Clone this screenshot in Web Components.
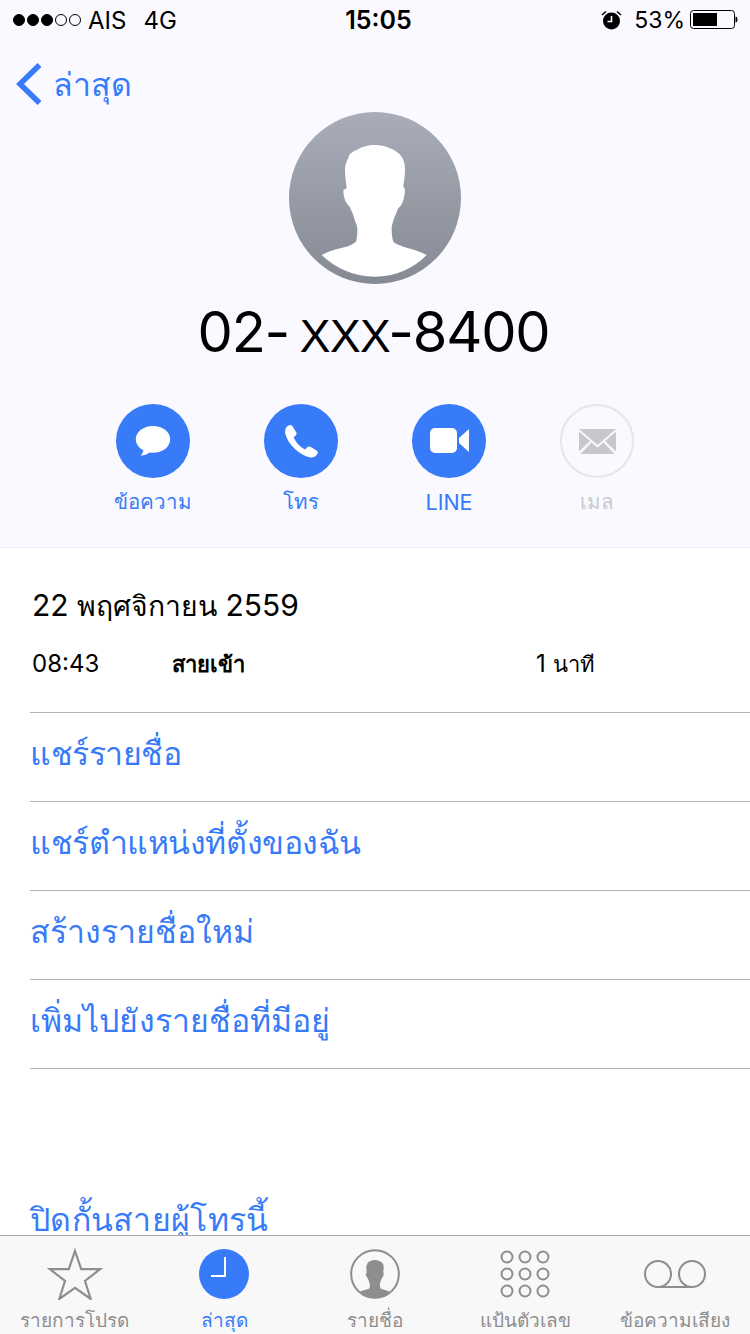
<!DOCTYPE html>
<html lang="th">
<head>
<meta charset="utf-8">
<title>ล่าสุด</title>
<style>
  html, body { margin: 0; padding: 0; background: #fff; }
  body { width: 750px; height: 1334px; overflow: hidden; font-family: Inter, "Noto Sans", "Liberation Sans", sans-serif; }
</style>
</head>
<body>
<call-app></call-app>
<script>
const FONT = 'Inter, "Noto Sans", "Liberation Sans", sans-serif'
const BLUE = '#377bf8'
const PERSON = 'M86 33C79 33 72 35 67.700 38C62 40 59.500 43 59.300 46.300C57 50 56 54 56 58C56 64 57 70 57.700 76.300L54.300 78C54.300 82 55 85 56 88C57 91 59 93 61 95.300C62 98 63 100 64.300 103C65 108 68 112 68.300 116.300C68.500 121 68 126 67 129.700C64 132 61 133.500 57.700 134.700C48 137 39 139 32.700 143C47 157 66 164.700 86 164.700C106 164.700 124 157 137.700 143C131 139 122 137 114.300 134.700C110 133 107 132 104.300 129.700C103 125 102.500 120 102.700 114.700C104 108 107 102 109.300 96.300C112 94 113.500 91 114.300 88C115.500 84 116 81 116 77.300L114.300 74.700C115 69 116 64 116 58C116 53 115 48 112.700 44.700C110 41 106 38 101 36.300C96 34 91 33 86 33z'

// Status bar at the top.
customElements.define('status-bar', class extends HTMLElement {
  constructor () {
    super()
    this.attachShadow({ mode: 'open' }).innerHTML = `
      <style>
        :host { display: grid; grid-template-columns: 1fr auto 1fr; align-items: center; height: 40px; padding: 0 12px 0 13px; font: 24px ${FONT}; color: #000; }
        .left, .right { display: flex; align-items: center; }
        .right { justify-content: flex-end; }
        .dots { display: flex; gap: 2px; margin-right: 7px; }
        .dots i { width: 12px; height: 12px; border-radius: 50%; border: 1px solid #000; box-sizing: border-box; }
        .dots i.on { background: #000; }
        .net { margin-left: 17px; }
        .time { font-weight: 600; font-size: 25px; margin-left: 6px; }
        .alarm { margin-right: 12px; }
        .pct { margin-right: 5px; font-size: 23px; }
        svg { display: block; }
      </style>
      <div class="left">
        <div class="dots"><i class="on"></i><i class="on"></i><i class="on"></i><i></i><i></i></div>
        <span>AIS</span><span class="net">4G</span>
      </div>
      <div class="time">15:05</div>
      <div class="right">
        <svg class="alarm" width="21" height="20" viewBox="0 0 21 20">
          <circle cx="10.500" cy="11" r="8.500" fill="#000"/>
          <path d="M10.500 6v5.500H6.500" fill="none" stroke="#fff" stroke-width="1.600"/>
          <path d="M1 5 5 1.500M20 5 16 1.500" stroke="#000" stroke-width="1.600"/>
        </svg>
        <span class="pct">53%</span>
        <svg width="48" height="20" viewBox="0 0 48 20">
          <rect x=".5" y=".5" width="44" height="18" rx="3" fill="none" stroke="#000"/>
          <rect x="3" y="3" width="24" height="13" fill="#000"/>
          <path d="M45.500 6.500c1.500 0 2 1.500 2 3s-.5 3-2 3z" fill="#000"/>
        </svg>
      </div>`
  }
})

// Circle button with an icon and a caption under it.
customElements.define('action-button', class extends HTMLElement {
  constructor () {
    super()
    this.attachShadow({ mode: 'open' }).innerHTML = `
      <style>
        :host { display: flex; flex-direction: column; align-items: center; width: 148px; color: ${BLUE}; font: 20.500px/30px ${FONT}; }
        .circle { width: 74px; height: 74px; border-radius: 50%; background: ${BLUE}; display: flex; align-items: center; justify-content: center; margin-bottom: 9px; box-sizing: border-box; }
        :host([off]) { color: #c9c9ce; }
        :host([off]) .circle { background: none; border: 2px solid #e6e6ea; }
      </style>
      <div class="circle"><slot name="icon"></slot></div>
      <slot></slot>`
  }
})

// One blue row of the list with a rule under it.
customElements.define('list-row', class extends HTMLElement {
  constructor () {
    super()
    this.attachShadow({ mode: 'open' }).innerHTML = `
      <style>
        :host { display: flex; align-items: center; box-sizing: border-box; height: 89px; padding-bottom: 7px; border-bottom: 1px solid #b2b2b2; color: ${BLUE}; font: 32px/44px ${FONT}; }
      </style>
      <slot></slot>`
  }
})

// Item of the tab bar.
customElements.define('tab-item', class extends HTMLElement {
  constructor () {
    super()
    this.attachShadow({ mode: 'open' }).innerHTML = `
      <style>
        :host { display: flex; flex-direction: column; align-items: center; color: #8e8e8e; font: 19px/26px ${FONT}; white-space: nowrap; }
        :host([active]) { color: ${BLUE}; }
        .icon { height: 58px; display: flex; align-items: center; justify-content: center; margin-top: 9px; margin-bottom: 5px; }
      </style>
      <div class="icon"><slot name="icon"></slot></div>
      <slot></slot>`
  }
})

customElements.define('tab-bar', class extends HTMLElement {
  constructor () {
    super()
    this.attachShadow({ mode: 'open' }).innerHTML = `
      <style>
        :host { display: grid; grid-template-columns: 149px 150px 151px 150px 150px; height: 99px; box-sizing: border-box; border-top: 1px solid #a9a9a9; background: #f8f8f8; flex: none; }
      </style>
      <slot></slot>`
  }
})

// The whole screen.
customElements.define('call-app', class extends HTMLElement {
  constructor () {
    super()
    this.attachShadow({ mode: 'open' }).innerHTML = `
      <style>
        :host { display: flex; flex-direction: column; width: 750px; height: 1334px; font-family: ${FONT}; }
        .main { flex: 1; overflow: hidden; min-height: 0; }
        .head { background: #f9f9ff; height: 547px; border-bottom: 1px solid #f0f0f3; }
        .nav { display: flex; align-items: center; gap: 10px; height: 88px; padding-left: 15px; color: ${BLUE}; font-size: 32px; }
        .avatar { display: block; margin: -16px auto 0; }
        .number { text-align: center; font-size: 56px; letter-spacing: -1.200px; word-spacing: -4px; line-height: 68px; margin-top: 14px; padding-right: 3px; color: #000; }
        .number span { font: 46px "Liberation Sans", sans-serif; letter-spacing: -.5px; margin-right: -2px; }
        .actions { display: flex; justify-content: center; margin-top: 38px; }
        .actions .latin { font-size: 21.500px; }
        .detail { padding: 37px 0 0 32px; color: #000; }
        .date { font-size: 30px; line-height: 40px; }
        .date span { font-size: 28.300px; }
        .call { display: grid; grid-template-columns: 140px 364px auto; font-size: 24px; line-height: 34px; margin-top: 21px; margin-bottom: 31px; }
        .call b { font-weight: 700; font-size: 22px; }
        .call span span { font-size: 22px; }
        .list { margin-left: 30px; border-top: 1px solid #b2b2b2; }
        .gap { height: 89px; }
        .block { color: ${BLUE}; font-size: 32px; letter-spacing: .3px; line-height: 44px; margin-left: 30px; margin-top: 40px; }
      </style>
      <div class="main">
        <div class="head">
          <status-bar></status-bar>
          <div class="nav">
            <svg width="28" height="44" viewBox="0 0 28 44"><path d="M24.500 3 5 22l19.500 19" fill="none" stroke="${BLUE}" stroke-width="5.500"/></svg>
            <span>ล่าสุด</span>
          </div>
          <svg class="avatar" width="172" height="172" viewBox="0 0 172 172">
            <defs>
              <linearGradient id="g" x1="0" y1="0" x2="0" y2="1"><stop offset="0" stop-color="#a9adb9"/><stop offset="1" stop-color="#868a94"/></linearGradient>
            </defs>
            <circle cx="86" cy="86" r="86" fill="url(#g)"/>
            <path fill="#fff" d="${PERSON}"/>
          </svg>
          <div class="number">02- <span>XXX</span>-8400</div>
          <div class="actions">
            <action-button>
              <svg slot="icon" width="36" height="32" viewBox="0 0 36 32"><path fill="#fff" d="M18 1C8.500 1 .8 6.900.8 14.200c0 4.600 3 8.600 7.600 11-.3 1.700-1.300 3.600-2.800 5.300 3 .2 6.500-1 8.700-3 1.200.2 2.400.3 3.700.3 9.500 0 17.200-6 17.200-13.600C35.200 6.900 27.500 1 18 1z"/></svg>
              ข้อความ
            </action-button>
            <action-button>
              <svg slot="icon" width="34" height="34" viewBox="0 0 34 34"><path fill="#fff" d="M3 2.500C4.500 1 6.800.300 8 1.600l4.200 6.600c.7 1.200.5 2.400-.5 3.300l-2 1.700c1.700 4.800 6.600 10 11.500 12.200l2-2.200c1-1 2.200-1 3.200-.4l6.500 4c1.400 1 .8 3.200-.5 4.500-1.600 1.800-4 2.500-7 1.900C15 30.800 4 20 1.500 10.500.700 7 1.300 4.400 3 2.500z"/></svg>
              โทร
            </action-button>
            <action-button>
              <svg slot="icon" width="39" height="26" viewBox="0 0 39 26"><rect x="0" y="0" width="27" height="25" rx="5" fill="#fff"/><path fill="#fff" d="M29 10 39 1v23L29 15z"/></svg>
              <span class="latin">LINE</span>
            </action-button>
            <action-button off>
              <svg slot="icon" width="37" height="25" viewBox="0 0 37 25"><path fill="#c7c7cc" d="M0 0h37L18.500 16zM0 2.500 11 12 0 22.500zM37 2.500 26 12l11 10.500zM1.500 25 12.500 13.500l6 5 6-5L35.500 25z"/></svg>
              เมล
            </action-button>
          </div>
        </div>
        <div class="detail">
          <div class="date">22 <span>พฤศจิกายน</span> 2559</div>
          <div class="call"><span>08:43</span><b>สายเข้า</b><span>1 <span>นาที</span></span></div>
        </div>
        <div class="list">
          <list-row style="letter-spacing:-.5px">แชร์รายชื่อ</list-row>
          <list-row style="letter-spacing:-.45px">แชร์ตำแหน่งที่ตั้งของฉัน</list-row>
          <list-row>สร้างรายชื่อใหม่</list-row>
          <list-row style="letter-spacing:.1px">เพิ่มไปยังรายชื่อที่มีอยู่</list-row>
        </div>
        <div class="gap"></div>
        <div class="block">ปิดกั้นสายผู้โทรนี้</div>
      </div>
      <tab-bar>
        <tab-item>
          <svg slot="icon" width="56" height="52" viewBox="0 0 56 52"><path d="M28 3l6.200 18.200H53L38 33l5.700 18L28 39.800 12.300 51 18 33 3 21.200h18.800z" fill="none" stroke="#8e8e8e" stroke-width="2.200"/></svg>
          รายการโปรด
        </tab-item>
        <tab-item active>
          <svg slot="icon" width="50" height="50" viewBox="0 0 50 50"><circle cx="25" cy="25" r="25" fill="${BLUE}"/><path d="M26 8v19H12" fill="none" stroke="#fff" stroke-width="2"/></svg>
          ล่าสุด
        </tab-item>
        <tab-item>
          <svg slot="icon" width="50" height="50" viewBox="0 0 172 172"><path transform="translate(0 5)" fill="#8e8e8e" d="${PERSON}"/><circle cx="86" cy="86" r="82" fill="none" stroke="#8e8e8e" stroke-width="7"/></svg>
          รายชื่อ
        </tab-item>
        <tab-item>
          <svg slot="icon" width="50" height="50" viewBox="0 0 50 50"><g fill="none" stroke="#8e8e8e" stroke-width="2"><circle cx="7" cy="8" r="5.500"/><circle cx="25" cy="8" r="5.500"/><circle cx="43" cy="8" r="5.500"/><circle cx="7" cy="25" r="5.500"/><circle cx="25" cy="25" r="5.500"/><circle cx="43" cy="25" r="5.500"/><circle cx="7" cy="42" r="5.500"/><circle cx="25" cy="42" r="5.500"/><circle cx="43" cy="42" r="5.500"/></g></svg>
          แป้นตัวเลข
        </tab-item>
        <tab-item>
          <svg slot="icon" width="64" height="30" viewBox="0 0 64 30"><g fill="none" stroke="#8e8e8e" stroke-width="2"><circle cx="15" cy="15" r="13"/><circle cx="49" cy="15" r="13"/><path d="M15 28h34"/></g></svg>
          ข้อความเสียง
        </tab-item>
      </tab-bar>`
  }
})
</script>
</body>
</html>
